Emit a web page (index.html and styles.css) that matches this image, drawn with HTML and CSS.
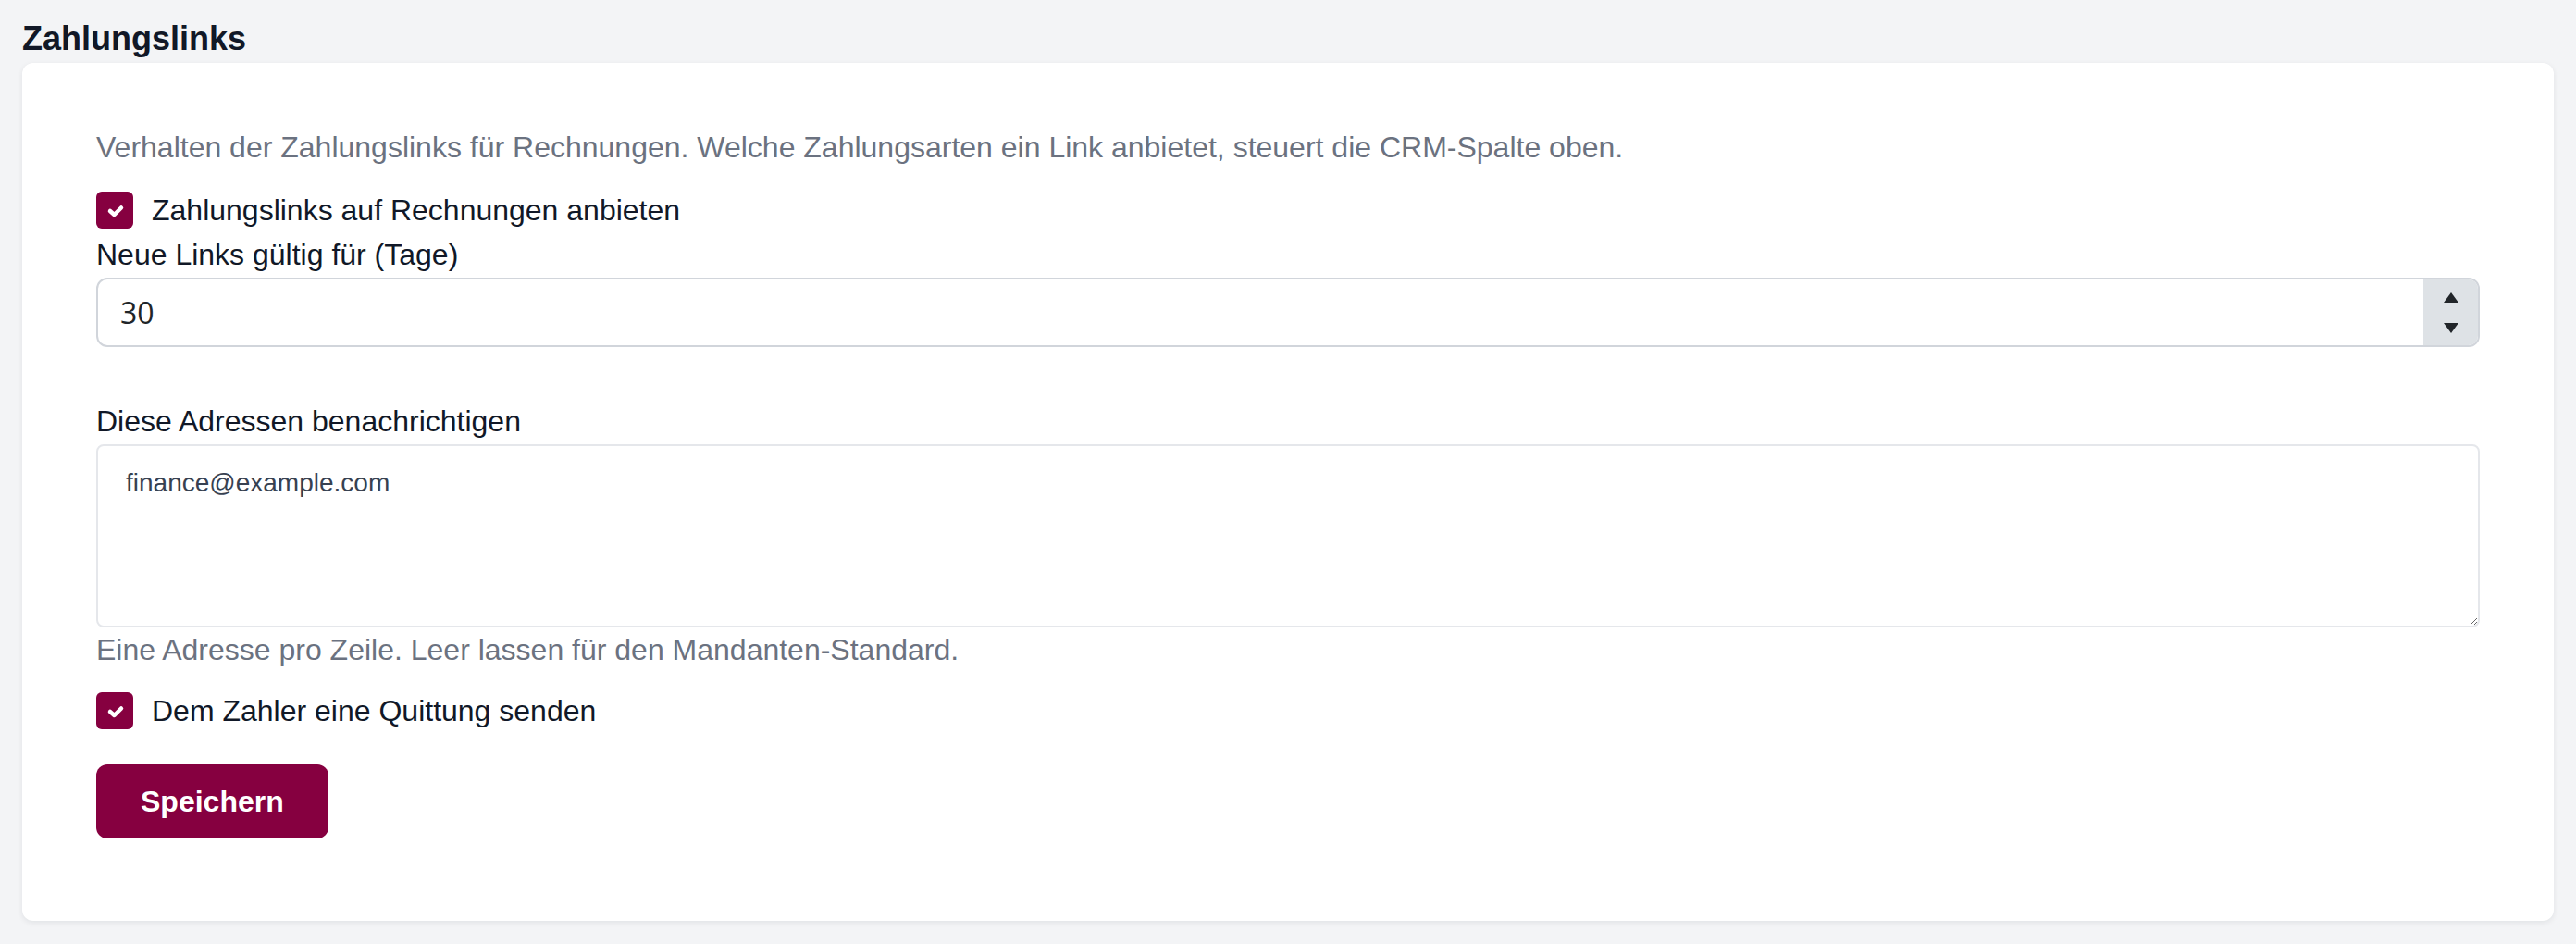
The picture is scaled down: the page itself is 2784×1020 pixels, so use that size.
FILE: index.html
```html
<!DOCTYPE html>
<html lang="de">
<head>
  <meta charset="UTF-8">
  <title>Zahlungslinks</title>
  <link rel="stylesheet" href="styles.css">
</head>
<body>
  <h2>Zahlungslinks</h2>

  <div class="card">
    <p class="hint intro">Verhalten der Zahlungslinks für Rechnungen. Welche Zahlungsarten ein Link anbietet, steuert die CRM-Spalte oben.</p>

    <!-- Enable links -->
    <label class="check-row">
      <span class="checkbox">
        <svg viewBox="0 0 40 40" width="40" height="40"><polyline points="15,21 19.5,25 27,17.5" /></svg>
      </span>
      <span>Zahlungslinks auf Rechnungen anbieten</span>
    </label>

    <label class="field-label" for="validDays">Neue Links gültig für (Tage)</label>
    <div class="number-field">
      <input type="number" id="validDays" value="30">
      <div class="spinner">
        <span class="arrow up"></span>
        <span class="arrow down"></span>
      </div>
    </div>

    <!-- Notify addresses -->
    <label class="field-label group" for="notify">Diese Adressen benachrichtigen</label>
    <textarea id="notify">finance@example.com</textarea>
    <p class="hint">Eine Adresse pro Zeile. Leer lassen für den Mandanten-Standard.</p>

    <label class="check-row receipt">
      <span class="checkbox">
        <svg viewBox="0 0 40 40" width="40" height="40"><polyline points="15,21 19.5,25 27,17.5" /></svg>
      </span>
      <span>Dem Zahler eine Quittung senden</span>
    </label>

    <button class="save">Speichern</button>
  </div>
</body>
</html>
```

FILE: styles.css
```css
body {
  margin: 0;
  padding: 16px 24px;
  background: #f3f4f6;
  font-family: "Liberation Sans", Arial, sans-serif;
  font-size: 32px;
  line-height: 48px;
  color: #111827;
}

h2 {
  margin: 0;
  font-size: 36px;
  line-height: 52px;
  font-weight: bold;
}

.card {
  background: #fff;
  border-radius: 12px;
  padding: 67px 80px 89px;
  box-shadow: 0 2px 6px rgba(17, 24, 39, 0.08);
}

.hint {
  margin: 0;
  color: #6b7280;
}

.intro {
  margin-bottom: 20px;
}

.check-row {
  display: flex;
  align-items: center;
  gap: 20px;
}

.check-row.receipt {
  margin-top: 18px;
}

.checkbox {
  width: 40px;
  height: 40px;
  border-radius: 6px;
  background: #860040;
  flex-shrink: 0;
}

.checkbox svg {
  display: block;
}

.checkbox polyline {
  fill: none;
  stroke: #fff;
  stroke-width: 4.5;
  stroke-linecap: round;
  stroke-linejoin: round;
}

.field-label {
  display: block;
}

.field-label.group {
  margin-top: 56px;
}

/* number input with drawn spin buttons */
.number-field {
  display: flex;
  height: 75px;
  margin-top: 1px;
  box-sizing: border-box;
  border: 2px solid #d1d5db;
  border-radius: 12px;
  overflow: hidden;
  background: #fff;
}

.number-field input {
  flex: 1;
  border: none;
  outline: none;
  padding: 0 24px;
  font-family: "Open Sans", sans-serif;
  font-size: 32px;
  color: #212529;
  background: transparent;
  -moz-appearance: textfield;
}

.number-field input::-webkit-inner-spin-button,
.number-field input::-webkit-outer-spin-button {
  -webkit-appearance: none;
  margin: 0;
}

.spinner {
  width: 59px;
  background: #dee2e6;
  display: flex;
  flex-direction: column;
  align-items: center;
  justify-content: center;
  gap: 22px;
}

.arrow {
  width: 0;
  height: 0;
  border-left: 8px solid transparent;
  border-right: 8px solid transparent;
}

.arrow.up   { border-bottom: 11px solid #212529; }
.arrow.down { border-top: 11px solid #212529; }

textarea {
  display: block;
  width: 100%;
  height: 198px;
  margin-top: 1px;
  box-sizing: border-box;
  border: 2px solid #e5e7eb;
  border-radius: 8px;
  padding: 24px 30px;
  font-family: "Liberation Sans", Arial, sans-serif;
  font-size: 28px;
  color: #374151;
  outline: none;
}

.save {
  display: block;
  margin-top: 34px;
  padding: 20px 48px;
  border: none;
  border-radius: 12px;
  background: #860040;
  color: #fff;
  font-family: "Liberation Sans", Arial, sans-serif;
  font-size: 32px;
  line-height: 40px;
  font-weight: bold;
  cursor: pointer;
}
```
